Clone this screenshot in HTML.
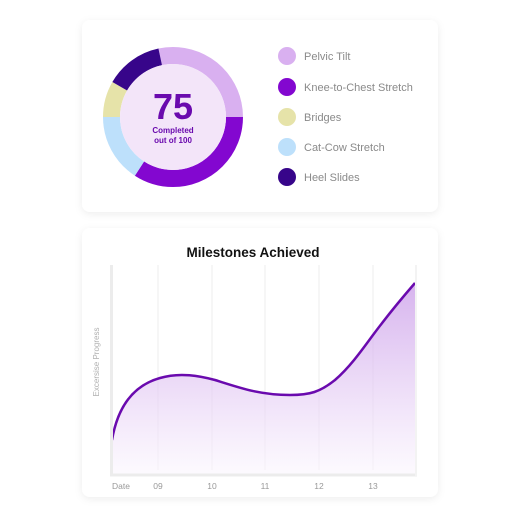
<!DOCTYPE html>
<html><head><meta charset="utf-8"><style>
html,body{margin:0;padding:0;background:#fff;}
svg{display:block;font-family:"Liberation Sans",sans-serif;}
</style></head><body>
<svg width="520" height="520" viewBox="0 0 520 520" xmlns="http://www.w3.org/2000/svg">
<defs>
<filter id="sh" x="-10%" y="-10%" width="120%" height="130%"><feDropShadow dx="0" dy="2" stdDeviation="4" flood-color="#000" flood-opacity="0.07"/></filter>
<linearGradient id="g" x1="0" y1="0" x2="0" y2="1"><stop offset="0" stop-color="#c99ae8" stop-opacity="0.75"/><stop offset="1" stop-color="#fbf6fe" stop-opacity="0.6"/></linearGradient>
</defs>
<rect x="82" y="20" width="356" height="192" rx="8" fill="#fff" filter="url(#sh)"/>
<rect x="82" y="228" width="356" height="269" rx="8" fill="#fff" filter="url(#sh)"/>
<g transform="translate(173,117)" fill="none" stroke-width="17">
<circle r="61.5" stroke="#d9b0f0" stroke-dasharray="109.5 400" transform="rotate(-102)"/>
<circle r="61.5" stroke="#8307d0" stroke-dasharray="132 400" transform="rotate(0)"/>
<circle r="61.5" stroke="#bde0fb" stroke-dasharray="61.2 400" transform="rotate(123)"/>
<circle r="61.5" stroke="#e6e3a9" stroke-dasharray="32.2 400" transform="rotate(180)"/>
<circle r="61.5" stroke="#37058a" stroke-dasharray="51.5 400" transform="rotate(210)"/>
</g>
<circle cx="173" cy="117" r="53" fill="#f3e5f9"/>
<text x="173" y="119" text-anchor="middle" font-size="36" font-weight="bold" fill="#6a0aae">75</text>
<text x="173" y="133" text-anchor="middle" font-size="8" font-weight="bold" fill="#6a0aae">Completed</text>
<text x="173" y="143" text-anchor="middle" font-size="8" font-weight="bold" fill="#6a0aae">out of 100</text>
<g font-size="11" fill="#8a8a8a">
<circle cx="287" cy="56" r="9" fill="#d9b0f0"/><text x="304" y="60">Pelvic Tilt</text>
<circle cx="287" cy="87" r="9" fill="#8307d0"/><text x="304" y="91">Knee-to-Chest Stretch</text>
<circle cx="287" cy="117" r="9" fill="#e6e3a9"/><text x="304" y="121">Bridges</text>
<circle cx="287" cy="147" r="9" fill="#bde0fb"/><text x="304" y="151">Cat-Cow Stretch</text>
<circle cx="287" cy="177" r="9" fill="#37058a"/><text x="304" y="181">Heel Slides</text>
</g>
<text x="253" y="257" text-anchor="middle" font-size="13.5" font-weight="bold" fill="#111">Milestones Achieved</text>
<g stroke="#ececec" stroke-width="1">
<line x1="158" y1="265" x2="158" y2="470"/><line x1="212" y1="265" x2="212" y2="470"/><line x1="265" y1="265" x2="265" y2="470"/><line x1="319" y1="265" x2="319" y2="470"/><line x1="373" y1="265" x2="373" y2="470"/>
</g>
<path d="M112,440 C118,405 135,385 160,378 C180,372 200,376 215,380 C240,388 260,395 290,395 C310,395 320,392 335,380 C350,367 362,350 373,335 C390,312 402,298 415,283 L415,474 L112,474 Z" fill="url(#g)"/>
<path d="M112,440 C118,405 135,385 160,378 C180,372 200,376 215,380 C240,388 260,395 290,395 C310,395 320,392 335,380 C350,367 362,350 373,335 C390,312 402,298 415,283" fill="none" stroke="#6a0aae" stroke-width="2.5"/>
<line x1="111.5" y1="265" x2="111.5" y2="476" stroke="#ececec" stroke-width="3"/>
<line x1="110" y1="475" x2="417" y2="475" stroke="#ececec" stroke-width="3"/>
<line x1="416" y1="265" x2="416" y2="476" stroke="#f3f3f3" stroke-width="2"/>
<text transform="translate(99,362) rotate(-90)" text-anchor="middle" font-size="8" fill="#b0b0b0">Excersise Progress</text>
<g font-size="8.5" fill="#999" text-anchor="middle">
<text x="121" y="489">Date</text><text x="158" y="489">09</text><text x="212" y="489">10</text><text x="265" y="489">11</text><text x="319" y="489">12</text><text x="373" y="489">13</text>
</g>
</svg>
</body></html>
